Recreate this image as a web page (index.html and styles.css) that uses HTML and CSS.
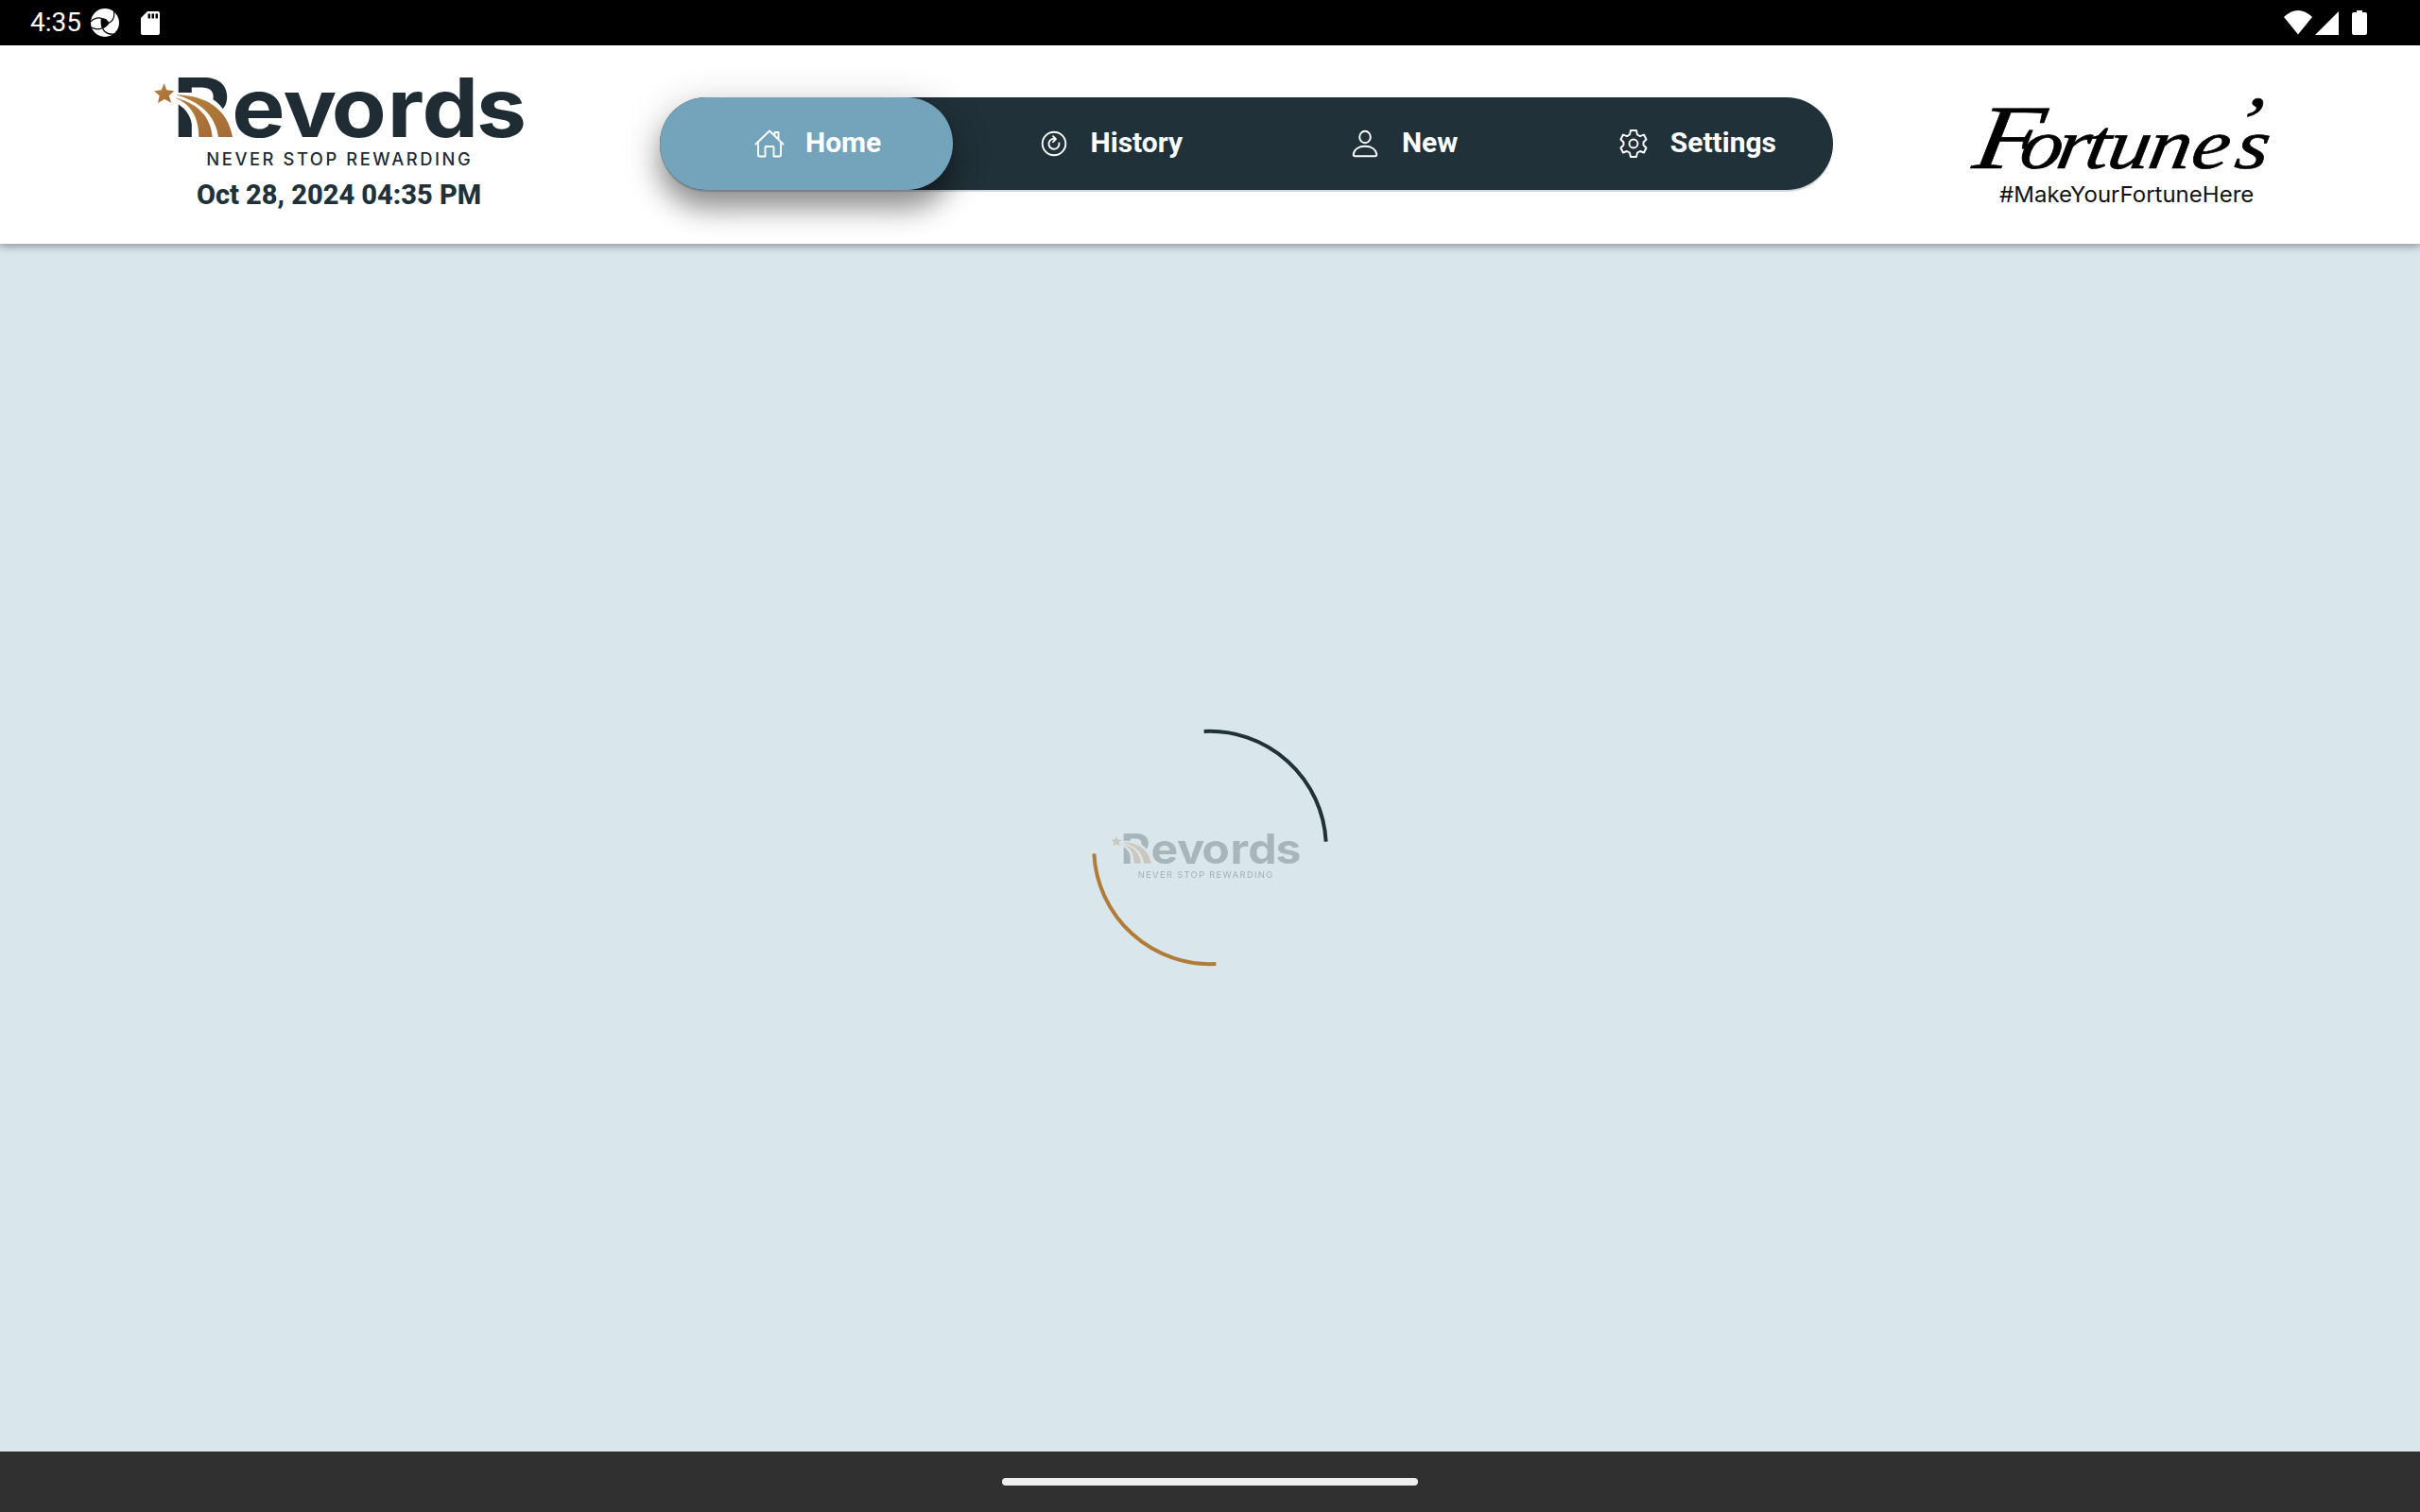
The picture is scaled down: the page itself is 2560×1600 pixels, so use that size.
FILE: index.html
```html
<!DOCTYPE html>
<html lang="en">
<head>
<meta charset="utf-8">
<title>Revords</title>
<link rel="stylesheet" href="styles.css">
</head>
<body>
<svg class="defs" width="0" height="0" aria-hidden="true">
  <defs>
    <linearGradient id="gold" x1="0" y1="0" x2="1" y2="1">
      <stop offset="0" stop-color="#b5833d"/><stop offset="1" stop-color="#a56a35"/>
    </linearGradient>
    <mask id="trail" maskUnits="userSpaceOnUse" x="60" y="40" width="1210" height="320">
      <rect x="60" y="40" width="1210" height="320" fill="#fff"/>
      <path d="M130 114H188C245 120 278 146 292 174C312 200 322 225 326 262H189V215C184 184 166 160 130 142Z" fill="#000"/>
    </mask>
    <symbol id="logo" viewBox="60 51 1200 300">
      <g mask="url(#trail)"><text class="wordmark" transform="scale(1.1 1)" y="255" x="116 287 435 575 736 836 993">Revords</text></g>
      <path fill="url(#gold)" d="M101 85L109 106L133 109L116 124L124 146L102 135L81 147L86 124L69 109L92 106Z"/>
      <path fill="url(#gold)" d="M137 121C235 123 302 166 318 255H273C265 192 221 144 137 121Z"/>
      <path fill="url(#gold)" d="M134 130C205 146 249 190 254 255H211C211 196 189 152 134 130Z"/>
      <text class="tagline" x="235" y="344" textLength="838">NEVER STOP REWARDING</text>
    </symbol>
  </defs>
</svg>

<div class="status">
  <div class="status-left">
    <span class="clock">4:35</span>
    <svg class="aperture" viewBox="0 0 30 30"><circle cx="15" cy="15" r="15" fill="#fff"/><path d="M11.500 10.500Q16 11 19 15.500Q15 20 12 21Q10.500 16 11.500 10.500Z" fill="#000"/><path d="M0 14Q5 8.500 12 10.500Q17 11 19 15.500M24.500 3Q26 12 19 15.500Q16 20 11.500 21Q6 23 1 20M11.500 10.500Q10 19 15 24.500Q19 28 26 27" fill="none" stroke="#000" stroke-width="1.200"/></svg>
    <svg class="sd" viewBox="0 0 20 25"><path d="M7 0H18Q20 0 20 2V23Q20 25 18 25H2Q0 25 0 23V7Z" fill="#fff"/><path d="M7.500 2.500H10V7.500H7.500ZM11.500 2.500H14V7.500H11.500ZM15.500 2.500H18V7.500H15.500Z" fill="#000"/></svg>
  </div>
  <svg class="signals" viewBox="0 0 88 26"><g fill="#fff"><path d="M0 7Q15 -7 30 7L15 25.500Z"/><path d="M33 26L58 1V26Z"/><path d="M77 0H83V2H86Q88 2 88 4V24Q88 26 86 26H74Q72 26 72 24V4Q72 2 74 2H77Z"/></g></svg>
</div>

<header class="header">
  <div class="brand">
    <svg class="brand-logo"><use href="#logo"/></svg>
    <div class="date">Oct 28, 2024 04:35 PM</div>
  </div>
  <nav class="nav">
    <a class="tab active">
      <svg class="icon" viewBox="0 0 32 32"><path d="M1.500 16.500L16 2.500L30.500 16.500M4 14.500V27.500Q4 29.500 6 29.500H11.500V20Q11.500 19 12.500 19H19.500Q20.500 19 20.500 20V29.500H26Q28 29.500 28 27.500V14.500M21.500 7.500V4H25.500V11.500"/></svg>
      <span>Home</span>
    </a>
    <a class="tab">
      <svg class="icon" viewBox="0 0 32 32"><circle cx="16" cy="16" r="12.300"/><path d="M16.500 10.800A5.500 5.500 0 1 0 21.400 15.500M15 8.200L18 11.200L15 14.200"/></svg>
      <span>History</span>
    </a>
    <a class="tab">
      <svg class="icon" viewBox="0 0 32 32"><ellipse cx="16" cy="9" rx="5.800" ry="6.300"/><path d="M3.700 27.500C4.500 22 9.500 18.800 16 18.800S27.500 22 28.300 27.500Q28.300 29.300 26.500 29.300H5.500Q3.700 29.300 3.700 27.500Z"/></svg>
      <span>New</span>
    </a>
    <a class="tab">
      <svg class="icon" viewBox="0 0 32 32"><path d="M13 2H19L20 6.500L23 8.200L27 6.500L29.500 11.500L26.500 14.500V17.500L29.500 20.500L27 25.500L23 24L20 25.700L19 30H13L12 25.700L9 24L5 25.500L2.500 20.500L5.500 17.500V14.500L2.500 11.500L5 6.500L9 8.200L12 6.500Z"/><circle cx="16" cy="16" r="4.500"/></svg>
      <span>Settings</span>
    </a>
  </nav>
  <svg class="fortune" viewBox="0 0 1080 450">
    <text class="script" transform="translate(62 0) skewX(-10) scale(1.2 1)" y="293" x="54 177 274 350 409 517 631 728 747"><tspan class="cap">F</tspan>ortune<tspan dy="-70">’</tspan><tspan dy="70">s</tspan></text>
    <text class="hashtag" x="165" y="401" textLength="808" lengthAdjust="spacingAndGlyphs">#MakeYourFortuneHere</text>
  </svg>
</header>

<main class="main">
  <svg class="spinner" viewBox="0 0 840 870">
    <path d="M401 72A369 369 0 0 1 788 422" stroke="#20313a"/>
    <path d="M52 460A369 369 0 0 0 439 810" stroke="#b07c38"/>
    <use class="ghost" href="#logo" x="102" y="387" width="612" height="153"/>
  </svg>
</main>

<footer class="gesture"><div class="handle"></div></footer>
</body>
</html>
```
FILE: styles.css
```css
* { box-sizing: border-box; }
body {
  margin: 0;
  width: 2560px;
  height: 1600px;
  overflow: hidden;
  display: flex;
  flex-direction: column;
  font-family: Roboto, sans-serif;
  background: #d9e6ec;
}
.defs { position: absolute; }
.status {
  height: 48px;
  flex: none;
  background: #000;
  color: #fff;
  display: flex;
  justify-content: space-between;
  align-items: center;
  padding: 0 56px 0 32px;
}
.status-left { display: flex; align-items: center; height: 48px; }
.clock { font-size: 28px; line-height: 48px; width: 64px; }
.aperture { width: 30px; height: 30px; }
.sd { width: 20px; height: 25px; margin-left: 23px; }
.signals { width: 88px; height: 26px; }

.header {
  height: 210px;
  flex: none;
  background: #fff;
  display: flex;
  align-items: flex-start;
  box-shadow: 0 3px 8px rgba(0, 0, 0, .34);
  z-index: 1;
}
.brand { width: 400px; margin-left: 160px; padding-top: 29px; }
.brand-logo { display: block; width: 400px; height: 100px; }
.wordmark { font: 750 258px Inter, sans-serif; fill: #1f2c34; }
.tagline { font: 450 55px Inter, sans-serif; fill: #1f2c34; }
.date {
  margin-top: 12px;
  margin-left: -3px;
  font-size: 29px;
  line-height: 34px;
  font-weight: 800;
  text-align: center;
  color: #20313a;
  white-space: nowrap;
}
.nav {
  width: 1241px;
  height: 98px;
  margin: 55px 0 0 138px;
  border-radius: 49px;
  background: #21313a;
  display: grid;
  grid-template-columns: repeat(4, 1fr);
  box-shadow: 0 2px 1px rgba(33, 49, 58, .2);
}
.tab {
  display: flex;
  align-items: center;
  justify-content: center;
  gap: 23px;
  padding-left: 23px;
  border-radius: 49px;
  color: #fff;
  font-size: 30px;
  line-height: 36px;
  font-weight: 700;
}
.tab span { margin-top: -3px; }
.tab.active {
  background: #73a4bb;
  gap: 22px;
  padding-left: 24px;
  box-shadow: 0 20px 28px rgba(0, 0, 0, .34), 0 8px 44px rgba(0, 0, 0, .2);
}
.icon {
  width: 32px;
  height: 32px;
  fill: none;
  stroke: #fff;
  stroke-width: 1.900;
  stroke-linecap: round;
  stroke-linejoin: round;
}
.fortune { width: 360px; height: 150px; margin: 32px 0 0 121px; overflow: visible; }
.script { font: italic 225px "Liberation Serif", cursive; fill: #000; stroke: #000; stroke-width: 2; }
.cap { font-size: 290px; }
.hashtag { font: 400 69px Inter, sans-serif; fill: #111; }

.main { flex: 1; display: flex; align-items: center; justify-content: center; }
.spinner { width: 280px; height: 290px; margin-top: -4px; }
.spinner path { stroke-width: 12; }
.spinner > path { fill: none; }
.ghost { opacity: .26; }

.gesture {
  height: 64px;
  flex: none;
  background: #303030;
  display: flex;
  align-items: center;
  justify-content: center;
}
.handle { width: 440px; height: 8px; border-radius: 4px; background: #eee; }
```
